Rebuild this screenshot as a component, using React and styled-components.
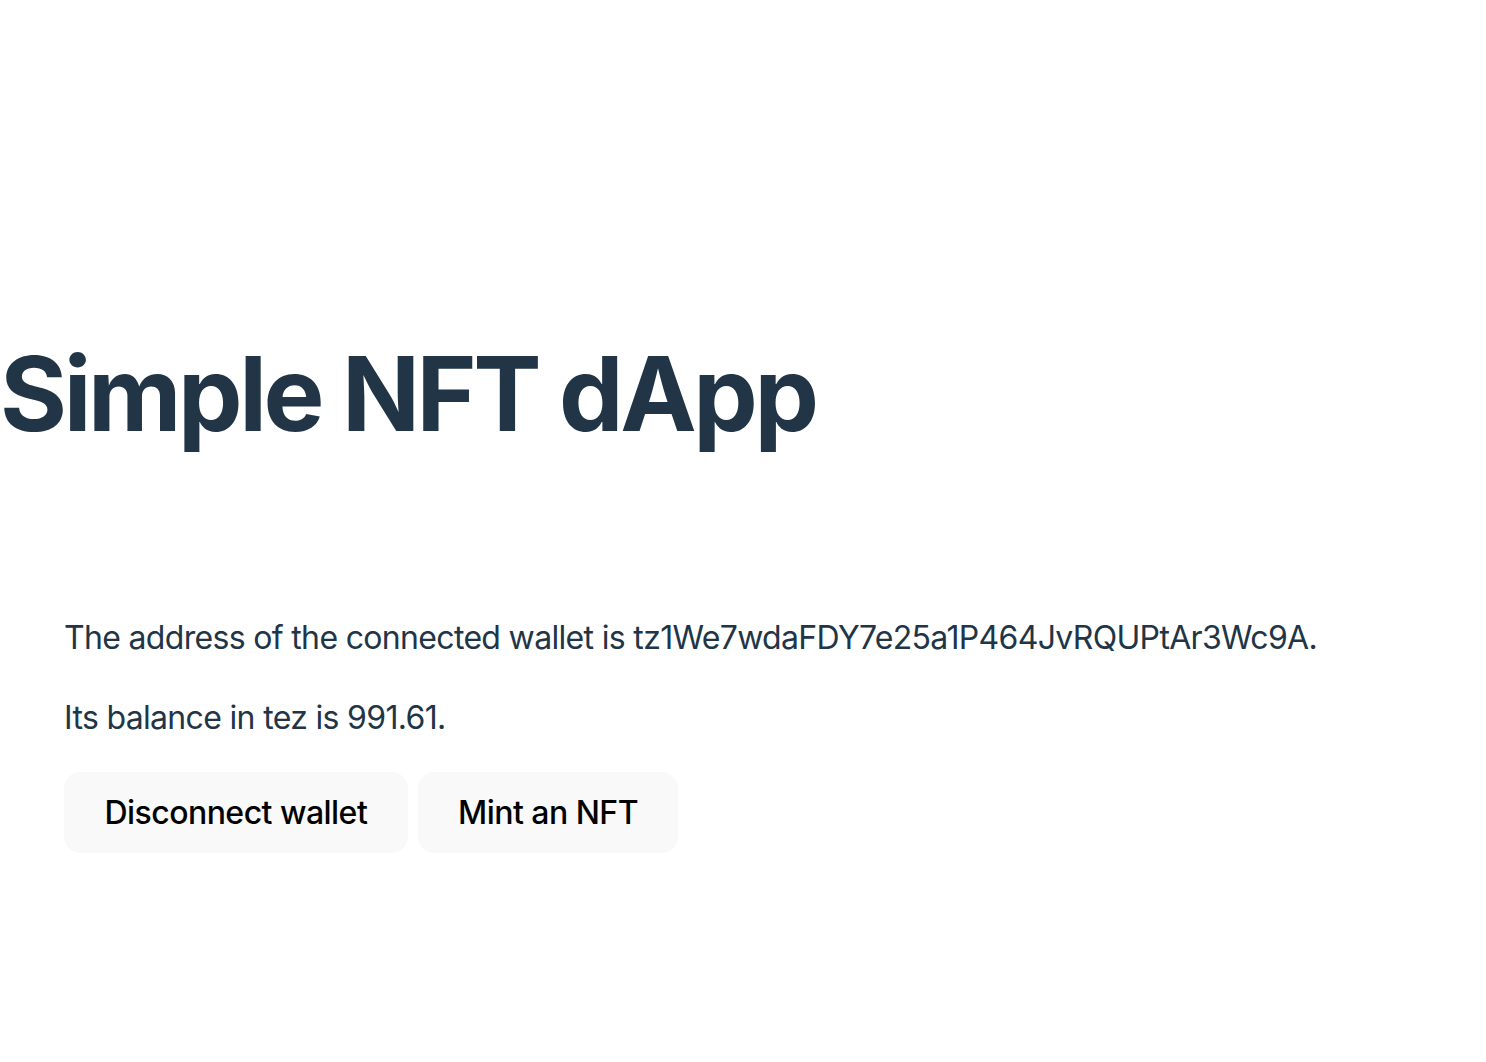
import React from "react";
import styled, { createGlobalStyle } from "styled-components";

const Global = createGlobalStyle`
  html, body { margin: 0; padding: 0; background: #ffffff; }
  body {
    font-family: Inter, "Noto Sans", sans-serif;
    color: #213547;
    font-size: 32px;
    line-height: 1.5;
    font-weight: 400;
    -webkit-font-smoothing: antialiased;
  }
`;

const Page = styled.div`
  padding-top: 338px;
  min-height: 1062px;
  box-sizing: border-box;
`;

const Title = styled.h1`
  margin: 0;
  font-size: 102.4px;
  line-height: 1.1;
  font-weight: 700;
  color: #213547;
  letter-spacing: -3.4px;
`;

const Content = styled.main`
  padding: 0 64px;
  margin-top: 163px;
`;

const Text = styled.p`
  margin: 0 0 32px 0;
  font-size: 32px;
  line-height: 48px;
  letter-spacing: -0.67px;
`;

const Actions = styled.div`
  display: flex;
  gap: 10px;
  margin-top: -2px;
`;

const Button = styled.button`
  font-family: Inter, "Noto Sans", sans-serif;
  font-size: 32px;
  font-weight: 500;
  line-height: normal;
  letter-spacing: -0.53px;
  color: #000;
  background: #f9f9f9;
  border: 2px solid transparent;
  border-radius: 16px;
  padding: 19.2px 38.4px;
  cursor: pointer;
`;

export default function App() {
  return (
    <>
      <Global />
      <Page>
        <Title>Simple NFT dApp</Title>
        <Content>
          <Text>The address of the connected wallet is tz1We7wdaFDY7e25a1P464JvRQUPtAr3Wc9A.</Text>
          <Text>Its balance in tez is 991.61.</Text>
          <Actions>
            <Button>Disconnect wallet</Button>
            <Button>Mint an NFT</Button>
          </Actions>
        </Content>
      </Page>
    </>
  );
}
